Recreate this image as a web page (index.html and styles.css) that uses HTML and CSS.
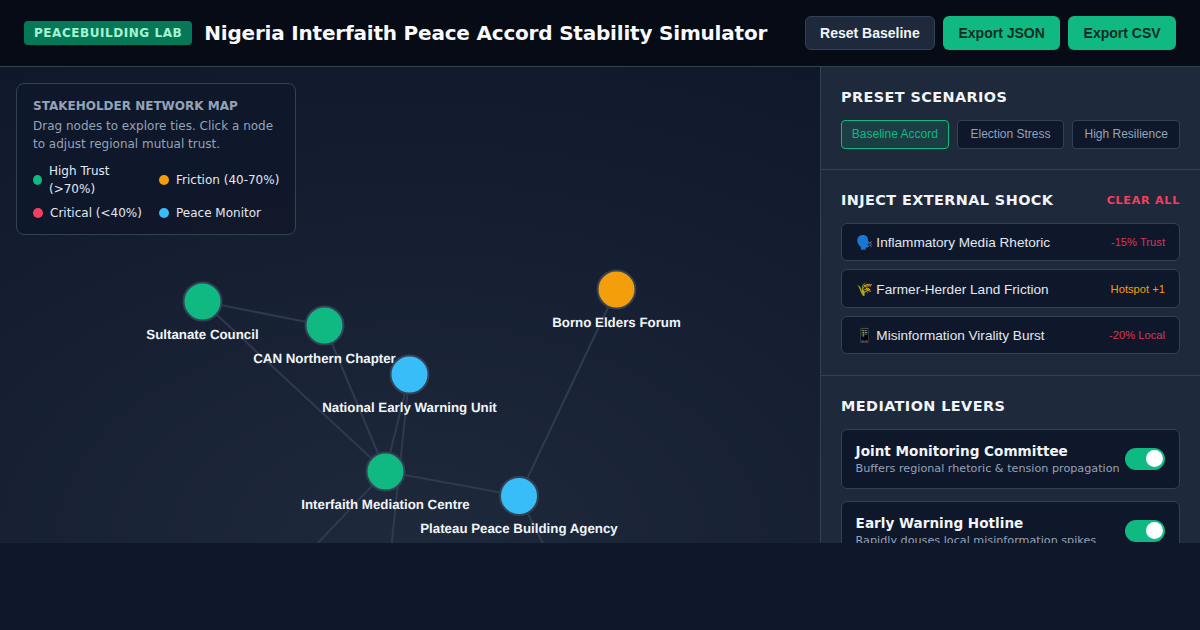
FILE: index.html
```html
<!DOCTYPE html>
<html lang="en">
<head>
  <meta charset="UTF-8" />
  <title>Nigeria Interfaith Peace Accord Stability Simulator</title>
  <link rel="stylesheet" href="styles.css">
</head>
<body>
  <div class="app">
    <!-- Header -->
    <header class="header">
      <div class="brand">
        <span class="badge">PEACEBUILDING LAB</span>
        <h1>Nigeria Interfaith Peace Accord Stability Simulator</h1>
      </div>
      <div class="actions">
        <button class="btn btn-dark">Reset Baseline</button>
        <button class="btn btn-green">Export JSON</button>
        <button class="btn btn-green">Export CSV</button>
      </div>
    </header>

    <div class="main">
      <!-- Network map -->
      <section class="stage">
        <svg class="graph" width="820" height="476" viewBox="0 0 820 476">
          <g class="links">
            <line x1="202.5" y1="234.5" x2="324.5" y2="258.5" />
            <line x1="202.5" y1="234.5" x2="385.5" y2="404.5" />
            <line x1="324.5" y1="258.5" x2="385.5" y2="404.5" />
            <line x1="409.5" y1="307.5" x2="385.5" y2="404.5" />
            <line x1="409.5" y1="307.5" x2="385" y2="540" />
            <line x1="385.5" y1="404.5" x2="519" y2="429" />
            <line x1="616.5" y1="222.5" x2="519" y2="429" />
            <line x1="385.5" y1="404.5" x2="250.5" y2="547.5" />
            <line x1="519" y1="429" x2="570" y2="530" />
          </g>
          <g class="node">
            <circle cx="202.5" cy="234.5" r="19" fill="#10b981" />
            <text x="202.5" y="271.5">Sultanate Council</text>
          </g>
          <g class="node">
            <circle cx="324.5" cy="258.5" r="19" fill="#10b981" />
            <text x="324.5" y="295.5">CAN Northern Chapter</text>
          </g>
          <g class="node">
            <circle cx="409.5" cy="307.5" r="19" fill="#38bdf8" />
            <text x="409.5" y="344.5">National Early Warning Unit</text>
          </g>
          <g class="node">
            <circle cx="385.5" cy="404.5" r="19" fill="#10b981" />
            <text x="385.5" y="441.5">Interfaith Mediation Centre</text>
          </g>
          <g class="node">
            <circle cx="519" cy="429" r="19" fill="#38bdf8" />
            <text x="519" y="466">Plateau Peace Building Agency</text>
          </g>
          <g class="node">
            <circle cx="616.5" cy="222.5" r="19" fill="#f59e0b" />
            <text x="616.5" y="259.5">Borno Elders Forum</text>
          </g>
        </svg>

        <div class="legend">
          <h4>STAKEHOLDER NETWORK MAP</h4>
          <p>Drag nodes to explore ties. Click a node to adjust regional mutual trust.</p>
          <div class="legend-grid">
            <div class="legend-item"><span class="dot dot-green"></span><span>High Trust (&gt;70%)</span></div>
            <div class="legend-item"><span class="dot dot-amber"></span><span>Friction (40-70%)</span></div>
            <div class="legend-item"><span class="dot dot-red"></span><span>Critical (&lt;40%)</span></div>
            <div class="legend-item"><span class="dot dot-blue"></span><span>Peace Monitor</span></div>
          </div>
        </div>
      </section>

      <!-- Sidebar -->
      <aside class="sidebar">
        <div class="panel panel-presets">
          <h3>PRESET SCENARIOS</h3>
          <div class="presets">
            <button class="preset active">Baseline Accord</button>
            <button class="preset">Election Stress</button>
            <button class="preset">High Resilience</button>
          </div>
        </div>

        <div class="panel panel-shocks">
          <div class="panel-head">
            <h3>INJECT EXTERNAL SHOCK</h3>
            <span class="clear">CLEAR ALL</span>
          </div>
          <div class="shock">
            <span>🗣️ Inflammatory Media Rhetoric</span>
            <span class="effect effect-red">-15% Trust</span>
          </div>
          <div class="shock">
            <span>🌾 Farmer-Herder Land Friction</span>
            <span class="effect effect-amber">Hotspot +1</span>
          </div>
          <div class="shock">
            <span>📱 Misinformation Virality Burst</span>
            <span class="effect effect-red">-20% Local</span>
          </div>
        </div>

        <div class="panel panel-levers">
          <h3>MEDIATION LEVERS</h3>
          <div class="lever">
            <div>
              <div class="lever-name">Joint Monitoring Committee</div>
              <div class="lever-desc">Buffers regional rhetoric &amp; tension propagation</div>
            </div>
            <span class="toggle"></span>
          </div>
          <div class="lever">
            <div>
              <div class="lever-name">Early Warning Hotline</div>
              <div class="lever-desc">Rapidly douses local misinformation spikes</div>
            </div>
            <span class="toggle"></span>
          </div>
        </div>
      </aside>
    </div>
  </div>
</body>
</html>
```

FILE: styles.css
```css
/* Basic Reset */
* { margin: 0; padding: 0; box-sizing: border-box; }

body {
  font-family: "DejaVu Sans", sans-serif;
  background: #0f172a;
  color: #f1f5f9;
}

.app {
  width: 1200px;
  height: 543px;
  overflow: hidden;
  display: flex;
  flex-direction: column;
}

/* Header */
.header {
  height: 67px;
  flex-shrink: 0;
  display: flex;
  align-items: center;
  justify-content: space-between;
  padding: 0 24px;
  background: #070b16;
  border-bottom: 1px solid #334155;
}

.brand {
  display: flex;
  align-items: center;
  gap: 12px;
  white-space: nowrap;
}

.badge {
  background: #047857;
  color: #a7f3d0;
  font-size: 12px;
  font-weight: 700;
  letter-spacing: 0.55px;
  line-height: 16px;
  padding: 4px 10px;
  border-radius: 4px;
}

h1 {
  font-size: 20px;
  font-weight: 700;
  letter-spacing: -0.2px;
  color: #f8fafc;
}

.actions {
  display: flex;
  gap: 8px;
  white-space: nowrap;
}

.btn {
  font-family: "Liberation Sans", sans-serif;
  font-size: 14px;
  font-weight: 700;
  height: 34px;
  padding: 0 14.4px;
  border-radius: 6px;
  border: 1px solid transparent;
}

.btn-dark {
  background: #1e293b;
  border-color: #334155;
  color: #f1f5f9;
}

.btn-green {
  background: #10b981;
  color: #0f2b25;
}

/* Map */
.main {
  flex: 1;
  display: flex;
  min-height: 0;
}

.stage {
  position: relative;
  width: 820px;
  flex-shrink: 0;
  overflow: hidden;
  background: radial-gradient(900px 560px at 50% 100%, #1e293b 0%, #0f172a 100%);
}

.graph {
  position: absolute;
  top: 0;
  left: 0;
}

.links line {
  stroke: #334155;
  stroke-width: 2;
  opacity: 0.8;
}

.node circle {
  stroke: #334155;
  stroke-width: 2;
}

.node text {
  font-family: "Liberation Sans", sans-serif;
  font-size: 13.3px;
  font-weight: 700;
  fill: #f1f5f9;
  text-anchor: middle;
  text-rendering: geometricPrecision;
}

.legend {
  position: absolute;
  top: 16px;
  left: 16px;
  width: 280px;
  padding: 15px 16px 12px;
  background: rgba(15, 23, 42, 0.9);
  border: 1px solid #334155;
  border-radius: 8px;
}

.legend h4 {
  font-size: 12px;
  font-weight: 700;
  color: #94a3b8;
  margin-bottom: 4px;
}

.legend p {
  font-size: 12px;
  line-height: 18px;
  color: #94a3b8;
  margin-bottom: 9px;
}

.legend-grid {
  display: grid;
  grid-template-columns: 110px 122px;
  gap: 6px 16px;
}

.legend-item {
  display: flex;
  align-items: center;
  gap: 7px;
  font-size: 12px;
  line-height: 18px;
  color: #e2e8f0;
}

.dot {
  width: 10px;
  height: 10px;
  border-radius: 50%;
  flex-shrink: 0;
}

.dot-green { background: #10b981; width: 9px; }
.dot-amber { background: #f59e0b; }
.dot-red { background: #f43f5e; }
.dot-blue { background: #38bdf8; }

/* Sidebar */
.sidebar {
  flex: 1;
  background: #1e293b;
  border-left: 1px solid #334155;
}

.panel {
  padding: 22px 20px 20px;
  border-bottom: 1px solid #334155;
}

.panel h3 {
  font-size: 14.4px;
  font-weight: 700;
  letter-spacing: 0.43px;
  color: #f1f5f9;
}

.panel-presets { height: 103px; }
.panel-shocks { height: 206px; }

.presets {
  display: flex;
  gap: 8px;
  margin-top: 14.5px;
}

.preset {
  flex: 1;
  font-family: "Liberation Sans", sans-serif;
  font-size: 12px;
  height: 29px;
  padding: 0;
  border-radius: 4px;
  border: 1px solid #334155;
  background: #0f172a;
  color: #94a3b8;
}

.preset.active {
  border-color: #10b981;
  background: rgba(16, 185, 129, 0.15);
  color: #10b981;
}

.panel-head {
  display: flex;
  justify-content: space-between;
  align-items: center;
  margin-bottom: 14.8px;
}

.clear {
  font-size: 11.2px;
  font-weight: 700;
  letter-spacing: 0.7px;
  color: #f43f5e;
}

.shock {
  display: flex;
  justify-content: space-between;
  align-items: center;
  height: 38.5px;
  padding: 0 14px 0 13.6px;
  margin-bottom: 8px;
  font-family: "Liberation Sans", sans-serif;
  font-size: 13.6px;
  color: #e2e8f0;
  background: #0f172a;
  border: 1px solid #334155;
  border-radius: 6px;
}

.effect { font-size: 11.2px; }
.effect-red { color: #f43f5e; opacity: 0.85; }
.effect-amber { color: #f59e0b; }

.lever {
  display: flex;
  justify-content: space-between;
  align-items: center;
  height: 60px;
  padding: 0 14px 0 13.6px;
  margin-top: 12px;
  background: #0f172a;
  border: 1px solid #334155;
  border-radius: 6px;
}

.panel-levers h3 { margin-bottom: 14.5px; }

.lever-name {
  font-size: 13.6px;
  font-weight: 700;
  color: #f1f5f9;
}

.lever-desc {
  font-size: 11.2px;
  color: #94a3b8;
  margin-top: 3px;
  white-space: nowrap;
}

.toggle {
  position: relative;
  width: 40px;
  height: 22px;
  flex-shrink: 0;
  border-radius: 11px;
  background: #10b981;
}

.toggle::after {
  content: "";
  position: absolute;
  top: 2.5px;
  right: 2.5px;
  width: 17px;
  height: 17px;
  border-radius: 50%;
  background: #fff;
}
```
